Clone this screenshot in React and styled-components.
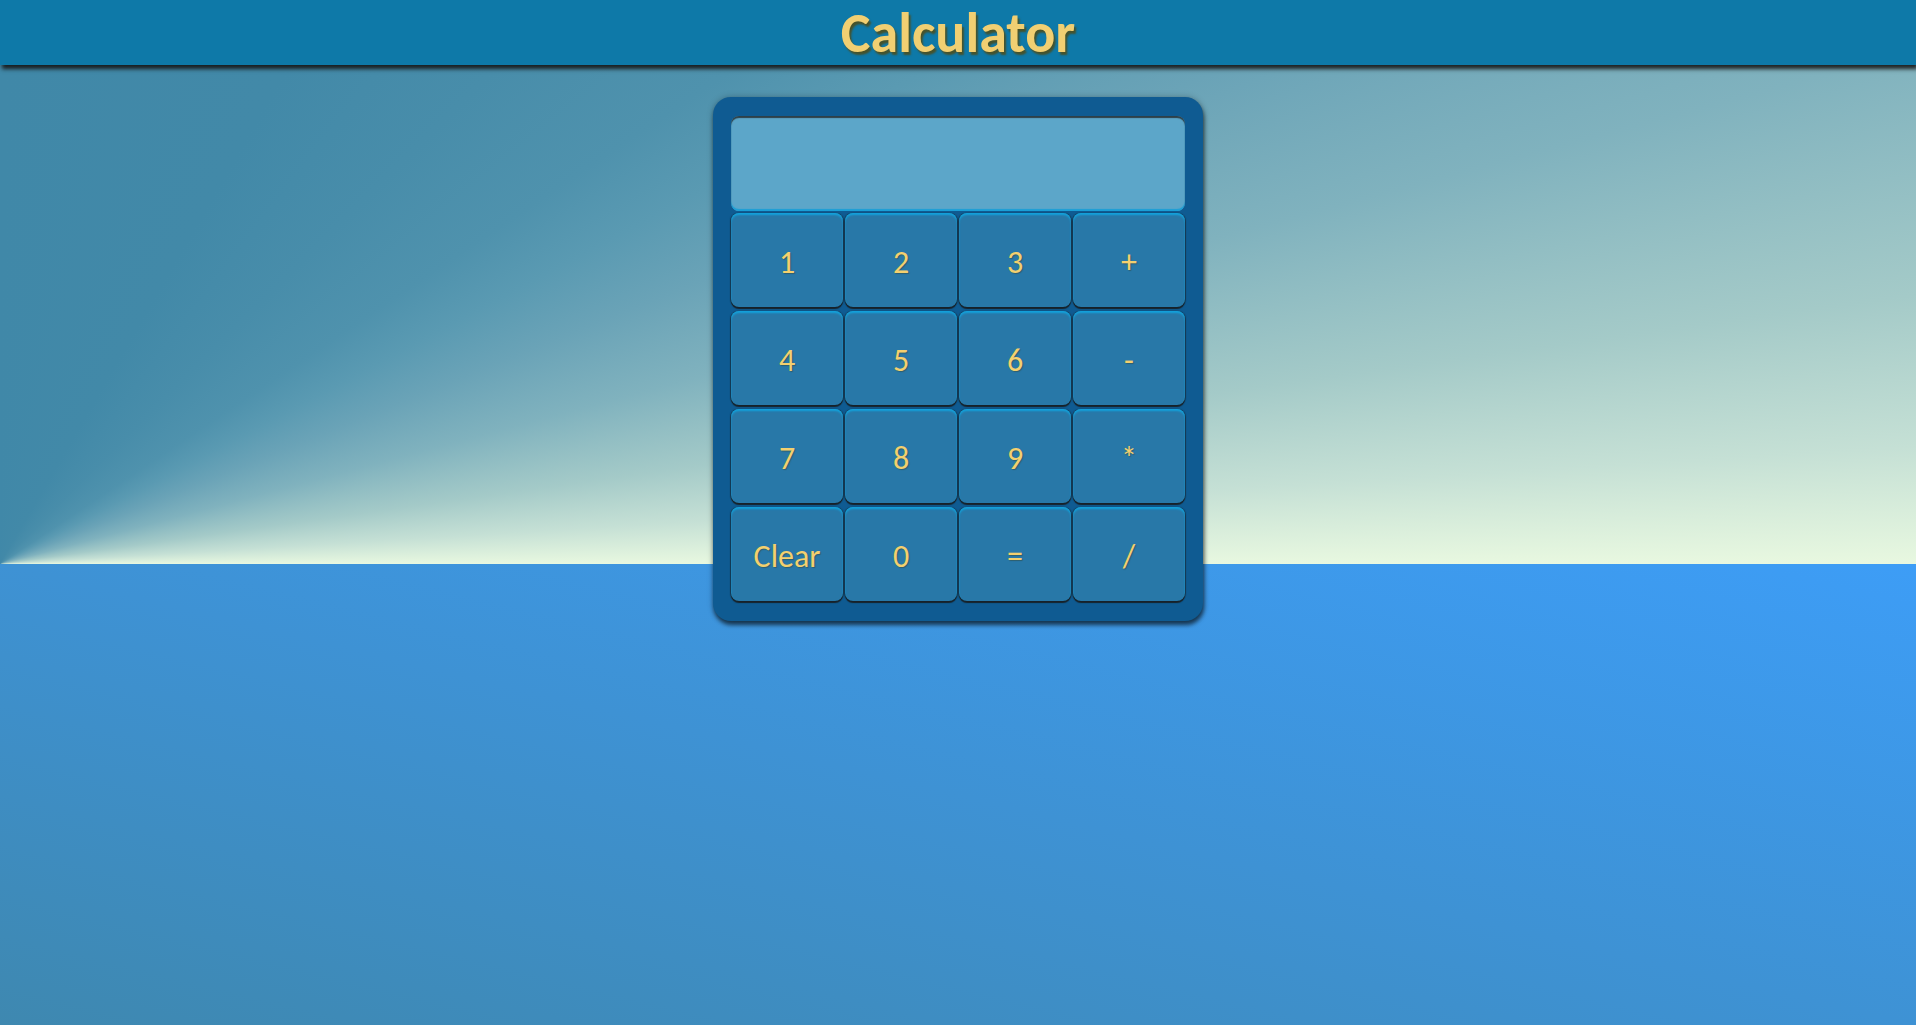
import React, { useState } from "react";
import styled, { createGlobalStyle } from "styled-components";

const GlobalStyle = createGlobalStyle`
  html, body {
    margin: 0;
    padding: 0;
  }
  body {
    font-family: Carlito, Calibri, Lato, "Noto Sans", sans-serif;
  }
`;

const Page = styled.div`
  min-height: 100vh;
  display: flex;
  flex-direction: column;
  align-items: center;
  background:
    conic-gradient(
        from 0deg at 0% 100%,
        #4088a8 0deg,
        #4289a8 30deg,
        #488daa 45deg,
        #4f92ad 56deg,
        #5a9ab2 62deg,
        #6aa3b7 68deg,
        #80b2be 75deg,
        #a4cac8 82deg,
        #c5e0d5 86.5deg,
        #e8f8e0 90deg
      )
      0 0 / 100% 564px no-repeat,
    linear-gradient(to bottom left, #3d9df6 0%, #3e92d4 50%, #3e88b0 100%) 0
      564px / 100% calc(100% - 564px) no-repeat;
`;

const Header = styled.header`
  align-self: stretch;
  height: 65px;
  display: flex;
  align-items: center;
  justify-content: center;
  background-color: #0e79a8;
  box-shadow: 2px 4px 4px rgba(20, 20, 20, 0.9);
  position: relative;
  z-index: 1;
`;

const Title = styled.h1`
  margin: 0;
  font-size: 56px;
  font-weight: 700;
  line-height: 1;
  color: #f1cf72;
  text-shadow: 2px 3px 2px rgba(90, 70, 0, 0.75);
`;

const Calculator = styled.div`
  margin-top: 32px;
  width: 454px;
  padding: 19px 18px 20px;
  display: flex;
  flex-direction: column;
  gap: 2px;
  background-color: #0f5b92;
  border-radius: 18px;
  box-shadow: 1px 4px 4px rgba(0, 0, 0, 0.6), 0 0 6px rgba(0, 0, 0, 0.25);
`;

const Display = styled.div`
  height: 95px;
  box-sizing: border-box;
  padding: 0 16px;
  display: flex;
  align-items: center;
  justify-content: flex-end;
  background-color: #5ca6c9;
  border-radius: 8px;
  box-shadow: inset 0 2px 1px rgba(30, 30, 30, 0.75),
    inset 0 -2px 1px #1a9fd6;
  font-size: 40px;
  color: #f1cf72;
  overflow: hidden;
`;

const Keys = styled.div`
  display: grid;
  grid-template-columns: repeat(4, 112px);
  grid-auto-rows: 94px;
  column-gap: 2px;
  row-gap: 4px;
`;

const Key = styled.button`
  font-family: inherit;
  font-size: 32px;
  color: #f3d06f;
  text-shadow: 1px 1px 1px rgba(60, 50, 0, 0.35);
  background-color: #2878a8;
  border: none;
  border-radius: 8px;
  padding: 4px 0 0;
  cursor: pointer;
  box-shadow: inset 0 2px 2px #12a2dc, 0 2px 1px rgba(25, 25, 25, 0.85),
    1px 0 1px rgba(25, 25, 25, 0.5), -1px 0 1px rgba(25, 25, 25, 0.5);

  &:active {
    background-color: #236c98;
  }
`;

const keys = [
  "1", "2", "3", "+",
  "4", "5", "6", "-",
  "7", "8", "9", "*",
  "Clear", "0", "=", "/",
];

function App() {
  const [value, setValue] = useState("");

  const press = (k) => {
    if (k === "Clear") {
      setValue("");
    } else if (k === "=") {
      try {
        // eslint-disable-next-line no-new-func
        const result = Function(`"use strict"; return (${value || 0})`)();
        setValue(String(result));
      } catch (e) {
        setValue("Error");
      }
    } else {
      setValue((prev) => (prev === "Error" ? k : prev + k));
    }
  };

  return (
    <Page>
      <GlobalStyle />
      <Header>
        <Title>Calculator</Title>
      </Header>
      <Calculator>
        <Display>{value}</Display>
        <Keys>
          {keys.map((k) => (
            <Key key={k} onClick={() => press(k)}>
              {k}
            </Key>
          ))}
        </Keys>
      </Calculator>
    </Page>
  );
}

export default App;
